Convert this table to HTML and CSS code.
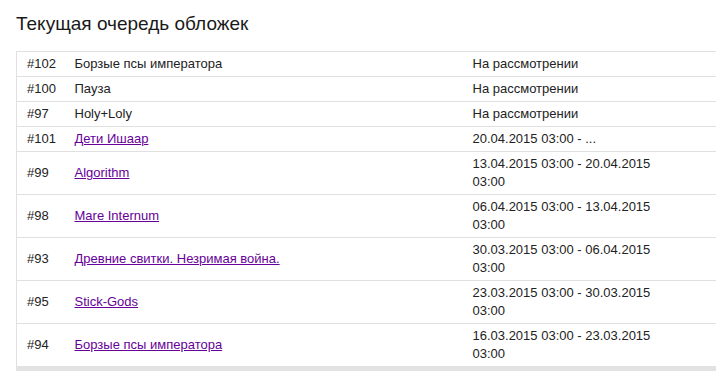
FILE: index.html
```html
<!DOCTYPE html>
<html lang="ru">
<head>
<meta charset="utf-8">
<title>Текущая очередь обложек</title>
<link rel="stylesheet" href="styles.css">
</head>
<body>
<div class="page">
  <h1 class="title">Текущая очередь обложек</h1>
  <table class="queue">
    <colgroup>
      <col class="c-id"><col class="c-name"><col class="c-date"><col class="c-rest">
    </colgroup>
    <tbody>
      <tr><td>#102</td><td>Борзые псы императора</td><td>На рассмотрении</td><td></td></tr>
      <tr><td>#100</td><td>Пауза</td><td>На рассмотрении</td><td></td></tr>
      <tr><td>#97</td><td>Holy+Loly</td><td>На рассмотрении</td><td></td></tr>
      <tr><td>#101</td><td><a class="link" href="#">Дети Ишаар</a></td><td>20.04.2015 03:00 - ...</td><td></td></tr>
      <tr><td>#99</td><td><a class="link" href="#">Algorithm</a></td><td>13.04.2015 03:00 - 20.04.2015 03:00</td><td></td></tr>
      <tr><td>#98</td><td><a class="link" href="#">Mare Internum</a></td><td>06.04.2015 03:00 - 13.04.2015 03:00</td><td></td></tr>
      <tr><td>#93</td><td><a class="link" href="#">Древние свитки. Незримая война.</a></td><td>30.03.2015 03:00 - 06.04.2015 03:00</td><td></td></tr>
      <tr><td>#95</td><td><a class="link" href="#">Stick-Gods</a></td><td>23.03.2015 03:00 - 30.03.2015 03:00</td><td></td></tr>
      <tr><td>#94</td><td><a class="link" href="#">Борзые псы императора</a></td><td>16.03.2015 03:00 - 23.03.2015 03:00</td><td></td></tr>
    </tbody>
  </table>
</div>
</body>
</html>
```
FILE: styles.css
```css
html, body {
  margin: 0;
  padding: 0;
  background: #fff;
}
body {
  font-family: "Liberation Sans", Arial, sans-serif;
  color: #222;
  overflow: hidden;
}
.page {
  padding: 12px 0 0 16px;
}
.title {
  margin: 0 0 15px 0;
  font-size: 19px;
  line-height: 24px;
  font-weight: normal;
  color: #1a1a1a;
}
.queue {
  width: 700px;
  table-layout: fixed;
  border-collapse: collapse;
  border-left: 1px solid #e0e0e0;
  border-top: 1px solid #e0e0e0;
  border-bottom: 5px solid #e2e2e2;
  font-size: 13px;
  line-height: 18px;
}
.c-id { width: 48px; }
.c-name { width: 398px; }
.c-date { width: 210px; }
.c-rest { width: auto; }
.queue td {
  padding: 3px 10px;
  border-bottom: 1px solid #e0e0e0;
  vertical-align: middle;
}
.link {
  color: #660099;
  text-decoration: underline;
}
```
